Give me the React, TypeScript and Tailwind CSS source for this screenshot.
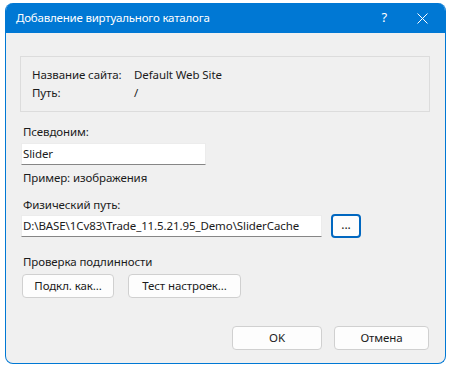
import React from 'react';

const font = { fontFamily: '"Noto Sans", "Open Sans", sans-serif' };

const Btn = ({ label, w }: { label: string; w: string }) => (
  <button
    className={`h-[24px] ${w} rounded-[4px] border border-[#d0d0d0] bg-[#fdfdfd] text-[11.5px] text-[#1b1b1b] flex items-center justify-center`}
  >
    {label}
  </button>
);

export default function App() {
  return (
    <div className="w-[450px] h-[369px] bg-white pt-[3px] pl-[5px]" style={font}>
      <div className="w-[441px] h-[361px] rounded-[8px] border border-[#0078d4] border-t-0 overflow-hidden bg-[#f0f0f0] flex flex-col">
        {/* title bar */}
        <div className="h-[30px] bg-[#0078d4] text-white text-[11.5px] tracking-[-0.2px] flex items-center pl-[10px] pr-[17px] shrink-0">
          <span className="flex-1">Добавление виртуального каталога</span>
          <span className="mr-[30px] text-[13px]">?</span>
          <svg width="11" height="11" viewBox="0 0 11 11" stroke="white" strokeWidth="1">
            <path d="M0.5 0.5 L10.5 10.5 M10.5 0.5 L0.5 10.5" />
          </svg>
        </div>

        <div className="flex-1 flex flex-col pl-[14px] pr-[15px] text-[11.5px] tracking-[-0.1px] text-[#1b1b1b]">
          <div className="mt-[23px] border border-[#dcdcdc] pt-[9px] pb-[9px] pl-[11px] leading-[18px]">
            <div className="flex">
              <span className="w-[102px]">Название сайта:</span>
              <span>Default Web Site</span>
            </div>
            <div className="flex">
              <span className="w-[102px]">Путь:</span>
              <span>/</span>
            </div>
          </div>

          <div className="mt-[12px] pl-[3px] leading-[16px]">Псевдоним:</div>
          <div className="mt-[3px] ml-[1px] w-[185px] h-[22px] bg-white border border-[#ececec] border-b-[#868686] pl-[1px] flex items-center">
            Slider
          </div>
          <div className="mt-[5px] pl-[3px] leading-[16px]">Пример: изображения</div>

          <div className="mt-[11px] pl-[3px] leading-[16px]">Физический путь:</div>
          <div className="mt-[1px] flex items-center h-[24px]">
            <div className="ml-[1px] w-[301px] h-[22px] bg-white border border-[#ececec] border-b-[#868686] pl-[1px] flex items-center whitespace-nowrap">
              D:\BASE\1Cv83\Trade_11.5.21.95_Demo\SliderCache
            </div>
            <button className="ml-[9px] w-[30px] h-[24px] rounded-[4px] border-2 border-[#0067c0] bg-[#fdfdfd] flex items-center justify-center text-[12px] leading-none pb-[2px]">
              ...
            </button>
          </div>

          <div className="mt-[16px] pl-[3px] leading-[16px]">Проверка подлинности</div>
          <div className="mt-[4px] flex gap-[14px] pl-[2px]">
            <Btn label="Подкл. как..." w="w-[92px]" />
            <Btn label="Тест настроек..." w="w-[113px]" />
          </div>

          <div className="mt-auto mb-[13px] flex justify-end gap-[12px] pr-[1px]">
            <Btn label="OK" w="w-[90px]" />
            <Btn label="Отмена" w="w-[95px]" />
          </div>
        </div>
      </div>
    </div>
  );
}
